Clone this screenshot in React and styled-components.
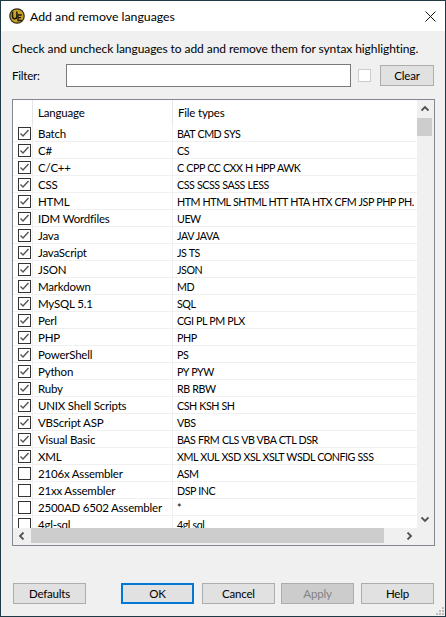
import React from "react";
import styled, { createGlobalStyle } from "styled-components";

const languages = [
  ["Batch", "BAT CMD SYS", true],
  ["C#", "CS", true],
  ["C/C++", "C CPP CC CXX H HPP AWK", true],
  ["CSS", "CSS SCSS SASS LESS", true],
  ["HTML", "HTM HTML SHTML HTT HTA HTX CFM JSP PHP PH.", true],
  ["IDM Wordfiles", "UEW", true],
  ["Java", "JAV JAVA", true],
  ["JavaScript", "JS TS", true],
  ["JSON", "JSON", true],
  ["Markdown", "MD", true],
  ["MySQL 5.1", "SQL", true],
  ["Perl", "CGI PL PM PLX", true],
  ["PHP", "PHP", true],
  ["PowerShell", "PS", true],
  ["Python", "PY PYW", true],
  ["Ruby", "RB RBW", true],
  ["UNIX Shell Scripts", "CSH KSH SH", true],
  ["VBScript ASP", "VBS", true],
  ["Visual Basic", "BAS FRM CLS VB VBA CTL DSR", true],
  ["XML", "XML XUL XSD XSL XSLT WSDL CONFIG SSS", true],
  ["2106x Assembler", "ASM", false],
  ["21xx Assembler", "DSP INC", false],
  ["2500AD 6502 Assembler", "*", false],
  ["4gl-sql", "4gl sql", false],
];

const GlobalStyle = createGlobalStyle`
  html, body {
    margin: 0;
    padding: 0;
    background: #f0f0f0;
  }
`;

const Window = styled.div`
  width: 446px;
  height: 617px;
  box-sizing: border-box;
  border: 1px solid #1f3a44;
  background: #f0f0f0;
  display: flex;
  flex-direction: column;
  font-family: Lato, Roboto, sans-serif;
  font-size: 11.5px;
  letter-spacing: -0.2px;
  color: #000;
  position: relative;
  overflow: hidden;
`;

const TitleBar = styled.div`
  height: 30px;
  background: #fff;
  display: flex;
  align-items: center;
  padding-left: 8px;
  gap: 5px;
  font-size: 12.3px;
  letter-spacing: 0;
  flex-shrink: 0;
`;

const TitleText = styled.span`
  flex: 1;
`;

const CloseButton = styled.div`
  width: 30px;
  height: 30px;
  display: flex;
  align-items: center;
  justify-content: center;
`;

const Body = styled.div`
  flex: 1;
  display: flex;
  flex-direction: column;
  padding: 10px 10px 12px 11px;
  min-height: 0;
`;

const Hint = styled.div`
  height: 16px;
  line-height: 16px;
  font-size: 12px;
  letter-spacing: -0.07px;
`;

const FilterRow = styled.div`
  display: flex;
  align-items: center;
  margin-top: 7px;
  height: 23px;
`;

const FilterLabel = styled.span`
  width: 54px;
`;

const FilterInput = styled.div`
  width: 285px;
  height: 23px;
  box-sizing: border-box;
  background: #fff;
  border: 1px solid #7a7a7a;
`;

const SmallBox = styled.div`
  width: 13px;
  height: 13px;
  box-sizing: border-box;
  background: #fff;
  border: 1px solid #ccc;
  margin-left: 7px;
`;

const Button = styled.div`
  box-sizing: border-box;
  height: 21px;
  width: ${(p) => p.$width || 73}px;
  margin-left: ${(p) => p.$gap || 0}px;
  display: flex;
  align-items: center;
  justify-content: center;
  background: ${(p) => (p.$disabled ? "#cccccc" : "#e1e1e1")};
  border: ${(p) => (p.$primary ? "2px solid #0078d7" : "1px solid #adadad")};
  color: ${(p) => (p.$disabled ? "#838383" : "#000")};
`;

const ListFrame = styled.div`
  margin-top: 12px;
  width: 423px;
  height: 447px;
  box-sizing: border-box;
  border: 1px solid #828790;
  background: #fff;
  display: grid;
  grid-template-columns: 404px 17px;
  grid-template-rows: 428px 17px;
`;

const ListArea = styled.div`
  overflow: hidden;
  min-width: 0;
`;

const HeaderRow = styled.div`
  display: flex;
  height: 25px;
`;

const HeaderCell = styled.div`
  box-sizing: border-box;
  width: ${(p) => p.$width}px;
  height: 25px;
  padding-left: 5px;
  display: flex;
  align-items: center;
  border-right: ${(p) => (p.$divider ? "1px solid #e5e5e5" : "0")};
`;

const Row = styled.div`
  display: flex;
  height: 17px;
  box-sizing: border-box;
  border-bottom: 1px solid #f0f0f0;
`;

const CheckCell = styled.div`
  width: 20px;
  padding: 2px 0 0 5px;
  box-sizing: border-box;
  border-right: 1px solid #f0f0f0;
  flex-shrink: 0;
`;

const NameCell = styled.div`
  width: 140px;
  box-sizing: border-box;
  padding-left: 5px;
  line-height: 17px;
  white-space: nowrap;
  overflow: hidden;
  border-right: 1px solid #f0f0f0;
  flex-shrink: 0;
`;

const TypesCell = styled.div`
  width: 244px;
  box-sizing: border-box;
  padding-left: 4px;
  line-height: 17px;
  font-size: 10.7px;
  letter-spacing: -0.46px;
  word-spacing: 0.3px;
  white-space: nowrap;
  overflow: hidden;
  flex-shrink: 0;
`;

const CheckBox = styled.div`
  width: 13px;
  height: 13px;
  box-sizing: border-box;
  border: 1px solid #333;
  background: #fff;
  display: flex;
  align-items: center;
  justify-content: center;
`;

const VScroll = styled.div`
  grid-row: 1 / 3;
  grid-column: 2;
  background: #f0f0f0;
  display: flex;
  flex-direction: column;
  padding-bottom: 17px;
`;

const HScroll = styled.div`
  grid-row: 2;
  grid-column: 1;
  background: #f0f0f0;
  display: flex;
  height: 17px;
`;

const ArrowBox = styled.div`
  width: ${(p) => p.$w}px;
  height: ${(p) => p.$h}px;
  flex-shrink: 0;
  display: flex;
  align-items: center;
  justify-content: center;
`;

const VThumb = styled.div`
  width: 15px;
  height: 18px;
  background: #cdcdcd;
`;

const Spring = styled.div`
  flex: 1;
`;

const HThumb = styled.div`
  width: 353px;
  height: 15px;
  background: #cdcdcd;
`;

const Footer = styled.div`
  margin-top: auto;
  margin-left: 1px;
  display: flex;
  align-items: center;
`;

const Grip = styled.svg`
  position: absolute;
  right: 0;
  bottom: 0;
`;

const Chevron = ({ dir }) => {
  const points = {
    up: "0.5,5.5 4,2 7.5,5.5",
    down: "0.5,2.5 4,6 7.5,2.5",
    left: "5.5,0.5 2,4 5.5,7.5",
    right: "2.5,0.5 6,4 2.5,7.5",
  }[dir];
  return (
    <svg width="8" height="8" viewBox="0 0 8 8">
      <polyline points={points} fill="none" stroke="#505050" strokeWidth="1.8" />
    </svg>
  );
};

const App = () => {
  return (
    <Window>
      <GlobalStyle />
      <TitleBar>
        <svg width="16" height="16" viewBox="0 0 16 16">
          <circle cx="8" cy="8" r="7.8" fill="#2b2a1c" />
          <circle cx="8" cy="8" r="6.6" fill="#c9a227" />
          <path d="M3.5 3.5v5a2.2 2.2 0 0 0 4.4 0v-5" fill="none" stroke="#1d1a0c" strokeWidth="1.5" />
          <path d="M12.8 7H9v5.5h3.8M9 9.7h3.2" fill="none" stroke="#1d1a0c" strokeWidth="1.3" />
        </svg>
        <TitleText>Add and remove languages</TitleText>
        <CloseButton>
          <svg width="11" height="11" viewBox="0 0 11 11">
            <path d="M0.5 0.5l10 10M10.5 0.5l-10 10" stroke="#111" strokeWidth="1" fill="none" />
          </svg>
        </CloseButton>
      </TitleBar>
      <Body>
        <Hint>Check and uncheck languages to add and remove them for syntax highlighting.</Hint>
        <FilterRow>
          <FilterLabel>Filter:</FilterLabel>
          <FilterInput />
          <SmallBox />
          <Button $width={54} $gap={9}>Clear</Button>
        </FilterRow>
        <ListFrame>
          <ListArea>
            <HeaderRow>
              <HeaderCell $width={20} $divider />
              <HeaderCell $width={140} $divider>Language</HeaderCell>
              <HeaderCell $width={244}>File types</HeaderCell>
            </HeaderRow>
            {languages.map(([name, types, checked]) => (
              <Row key={name}>
                <CheckCell>
                  <CheckBox>
                    {checked && (
                      <svg width="11" height="11" viewBox="0 0 11 11">
                        <polyline points="1.5,5.5 4,8 9.5,2" fill="none" stroke="#555" strokeWidth="1.4" />
                      </svg>
                    )}
                  </CheckBox>
                </CheckCell>
                <NameCell>{name}</NameCell>
                <TypesCell>{types}</TypesCell>
              </Row>
            ))}
          </ListArea>
          <VScroll>
            <ArrowBox $w={16} $h={18}><Chevron dir="up" /></ArrowBox>
            <VThumb />
            <Spring />
            <ArrowBox $w={16} $h={18}><Chevron dir="down" /></ArrowBox>
          </VScroll>
          <HScroll>
            <ArrowBox $w={18} $h={15}><Chevron dir="left" /></ArrowBox>
            <HThumb />
            <Spring />
            <ArrowBox $w={17} $h={15}><Chevron dir="right" /></ArrowBox>
          </HScroll>
        </ListFrame>
        <Footer>
          <Button>Defaults</Button>
          <Button $gap={35} $primary>OK</Button>
          <Button $gap={8}>Cancel</Button>
          <Button $gap={6} $disabled>Apply</Button>
          <Button $gap={7}>Help</Button>
        </Footer>
      </Body>
      <Grip width="12" height="12" viewBox="0 0 12 12">
        <path d="M9 3h2v2H9zM6 6h2v2H6zM9 6h2v2H9zM3 9h2v2H3zM6 9h2v2H6zM9 9h2v2H9z" fill="#bdbdbd" />
      </Grip>
    </Window>
  );
};

export default App;
